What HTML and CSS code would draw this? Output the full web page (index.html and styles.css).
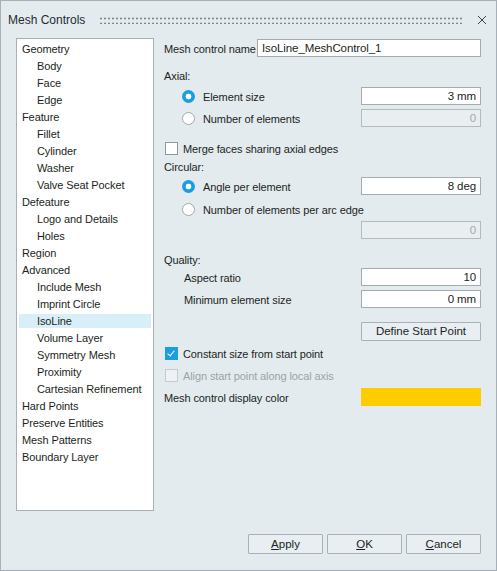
FILE: index.html
```html
<!DOCTYPE html>
<html lang="en">
  <head>
    <meta charset="UTF-8" />
    <title>Mesh Controls</title>
    <link rel="stylesheet" href="styles.css">
  </head>
  <body>
    <div class="window">
      <!-- Title bar -->
      <div class="titlebar">
        <span class="title">Mesh Controls</span>
        <div class="grip"></div>
        <svg class="close" width="10" height="10" viewBox="0 0 10 10">
          <path d="M1 1 L9 9 M9 1 L1 9" stroke="#3c4348" stroke-width="1" fill="none" />
        </svg>
      </div>

      <div class="main">
        <!-- Control type tree -->
        <div class="tree">
          <div class="item">Geometry</div>
          <div class="item child">Body</div>
          <div class="item child">Face</div>
          <div class="item child">Edge</div>
          <div class="item">Feature</div>
          <div class="item child">Fillet</div>
          <div class="item child">Cylinder</div>
          <div class="item child">Washer</div>
          <div class="item child">Valve Seat Pocket</div>
          <div class="item">Defeature</div>
          <div class="item child">Logo and Details</div>
          <div class="item child">Holes</div>
          <div class="item">Region</div>
          <div class="item">Advanced</div>
          <div class="item child">Include Mesh</div>
          <div class="item child">Imprint Circle</div>
          <div class="item child selected"><span>IsoLine</span></div>
          <div class="item child">Volume Layer</div>
          <div class="item child">Symmetry Mesh</div>
          <div class="item child">Proximity</div>
          <div class="item child">Cartesian Refinement</div>
          <div class="item">Hard Points</div>
          <div class="item">Preserve Entities</div>
          <div class="item">Mesh Patterns</div>
          <div class="item">Boundary Layer</div>
        </div>

        <!-- Settings -->
        <div class="form">
          <div class="row">
            <span class="label">Mesh control name</span>
            <div class="field name-field">IsoLine_MeshControl_1</div>
          </div>

          <div class="row gap-9"><span class="label">Axial:</span></div>
          <div class="row gap-3">
            <span class="radio checked"></span>
            <span class="label">Element size</span>
            <div class="field value">3 mm</div>
          </div>
          <div class="row gap-4">
            <span class="radio"></span>
            <span class="label">Number of elements</span>
            <div class="field value disabled">0</div>
          </div>

          <div class="row gap-12">
            <span class="check"></span>
            <span class="label">Merge faces sharing axial edges</span>
          </div>
          <div class="row"><span class="label">Circular:</span></div>
          <div class="row gap-2">
            <span class="radio checked"></span>
            <span class="label">Angle per element</span>
            <div class="field value">8 deg</div>
          </div>
          <div class="row gap-5">
            <span class="radio"></span>
            <span class="label">Number of elements per arc edge</span>
          </div>
          <div class="row gap-3">
            <div class="field value disabled">0</div>
          </div>

          <div class="row gap-11"><span class="label">Quality:</span></div>
          <div class="row">
            <span class="label sub">Aspect ratio</span>
            <div class="field value">10</div>
          </div>
          <div class="row gap-4">
            <span class="label sub">Minimum element size</span>
            <div class="field value">0 mm</div>
          </div>
          <div class="row gap-14 tall">
            <button class="field button">Define Start Point</button>
          </div>

          <div class="row gap-3">
            <span class="check checked"></span>
            <span class="label">Constant size from start point</span>
          </div>
          <div class="row gap-4">
            <span class="check disabled"></span>
            <span class="label muted">Align start point along local axis</span>
          </div>
          <div class="row gap-4">
            <span class="label">Mesh control display color</span>
            <div class="field swatch"></div>
          </div>
        </div>
      </div>

      <!-- Dialog buttons -->
      <div class="footer">
        <button class="dlg-button"><u>A</u>pply</button>
        <button class="dlg-button"><u>O</u>K</button>
        <button class="dlg-button"><u>C</u>ancel</button>
      </div>
    </div>
  </body>
</html>
```

FILE: styles.css
```css
* {
  box-sizing: border-box;
}

body {
  margin: 0;
  font-family: "Liberation Sans", Arial, sans-serif;
  font-size: 11px;
  letter-spacing: -0.1px;
  color: #1b1f22;
}

.window {
  width: 497px;
  height: 571px;
  border: 1px solid #a7b0b6;
  background-color: #e4ebef;
  display: flex;
  flex-direction: column;
}

/* Title bar */
.titlebar {
  height: 37px;
  display: flex;
  align-items: center;
  padding: 1px 9px 0 7px;
}

.title {
  font-size: 12px;
  letter-spacing: 0;
  color: #1f2a33;
}

.grip {
  flex: 1;
  height: 8px;
  margin: 0 13px 0 14px;
  background-image: radial-gradient(circle, #7d868c 0.9px, transparent 1.2px);
  background-size: 4px 5px;
  background-position: 0 0;
}

.close {
  display: block;
}

/* Main area */
.main {
  display: flex;
  padding: 0 15px;
  height: 473px;
}

.tree {
  width: 138px;
  height: 473px;
  background-color: white;
  border: 1px solid #a9b1b7;
  padding-top: 2px;
}

.item {
  height: 17px;
  line-height: 17px;
  padding-left: 5px;
  white-space: nowrap;
}

.item.child {
  padding-left: 20px;
}

.item.selected {
  padding: 1px 2px 2px 2px;
  line-height: 14px;
}

.item.selected span {
  display: block;
  height: 14px;
  padding-left: 18px;
  background-color: #d8eff9;
}

.form {
  flex: 1;
  margin-left: 10px;
  padding-top: 1px;
}

.row {
  display: flex;
  align-items: center;
  height: 18px;
}

.row.tall {
  height: 19px;
}

.gap-2 { margin-top: 2px; }
.gap-3 { margin-top: 3px; }
.gap-4 { margin-top: 4px; }
.gap-5 { margin-top: 5px; }
.gap-9 { margin-top: 9px; }
.gap-11 { margin-top: 11px; }
.gap-12 { margin-top: 12px; }
.gap-14 { margin-top: 14px; }

.label {
  white-space: nowrap;
  padding-top: 1px;
}

.label.sub {
  margin-left: 20px;
}

.label.muted {
  color: #9ba3a8;
}

.field {
  height: 18px;
  border: 1px solid #a4acb2;
  background-color: white;
  margin-left: auto;
  width: 120px;
  line-height: 17px;
  padding: 0 4px;
}

.name-field {
  width: 224px;
  font-size: 11.5px;
}

.field.value {
  text-align: right;
  font-size: 11.5px;
}

.field.disabled {
  background-color: #e9eef1;
  border-color: #b3bbc0;
  color: #a2aaaf;
}

.field.button {
  height: 19px;
  font-family: inherit;
  font-size: 11.5px;
  color: #1b1f22;
  background-color: #e8eef1;
  border-color: #a9b1b6;
  border-radius: 1px;
}

.field.swatch {
  background-color: #ffcc00;
  border: none;
}

/* Radio buttons */
.radio {
  width: 13px;
  height: 13px;
  border-radius: 50%;
  border: 1px solid #a1a9ae;
  background-color: white;
  margin: 0 8px 0 18px;
}

.radio.checked {
  border: none;
  background: radial-gradient(circle, white 2.6px, #1b9ee0 3.2px);
}

/* Check boxes */
.check {
  width: 13px;
  height: 13px;
  border: 1px solid #8e979d;
  background-color: white;
  margin: 0 5px 0 1px;
  position: relative;
}

.check.checked {
  border: none;
  background-color: #1b9ee0;
}

.check.checked::after {
  content: "";
  position: absolute;
  left: 4px;
  top: 2px;
  width: 3px;
  height: 6px;
  border: solid white;
  border-width: 0 1.5px 1.5px 0;
  transform: rotate(40deg);
}

.check.disabled {
  border-color: #c4cbcf;
  background-color: #eef2f4;
}

/* Footer */
.footer {
  display: flex;
  justify-content: flex-end;
  gap: 4px;
  padding: 0 15px 0 0;
  margin-top: 23px;
}

.dlg-button {
  width: 75px;
  height: 20px;
  font-family: inherit;
  font-size: 11.5px;
  color: #1b1f22;
  background-color: #e8eef1;
  border: 1px solid #a9b1b6;
  border-radius: 1px;
  padding: 0;
}
```
